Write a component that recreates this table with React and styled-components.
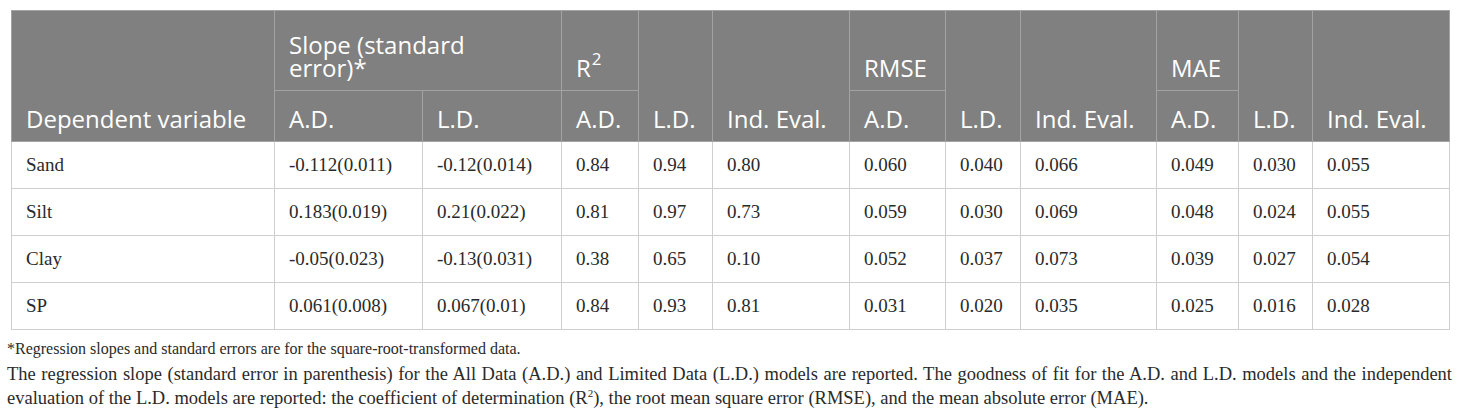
import React from 'react'
import styled, { createGlobalStyle } from 'styled-components'

const GlobalStyle = createGlobalStyle`
  html, body {
    margin: 0;
    padding: 0;
    background: #ffffff;
  }
`

const Page = styled.div`
  width: 1460px;
  height: 420px;
  padding: 10px 0 0 0;
  box-sizing: border-box;
  overflow: hidden;
`

const TableWrap = styled.div`
  padding: 0 10px 0 11px;
`

const Table = styled.table`
  border-collapse: collapse;
  table-layout: fixed;
  width: 1438px;
  border: 1px solid #cfcfcf;
`

const HeadCell = styled.th`
  background: #808080;
  color: #ffffff;
  font-family: 'Open Sans', 'Noto Sans', sans-serif;
  font-weight: 400;
  font-size: 24px;
  line-height: 23px;
  text-align: left;
  vertical-align: bottom;
  padding: 0 14px 11px 14px;
  border: 1px solid #a3a3a3;
  height: ${(p) => (p.$top ? '68px' : '39px')};

  sup {
    font-size: 17px;
    line-height: 0;
    position: relative;
    top: -3px;
    margin-left: 1px;
  }
`

const Row = styled.tr`
  height: 47px;
`

const Cell = styled.td`
  font-family: 'Liberation Serif', 'Times New Roman', serif;
  font-size: 19px;
  color: #2a2a2a;
  padding: 0 14px;
  vertical-align: middle;
  border: 1px solid #cfcfcf;
  white-space: nowrap;
`

const Notes = styled.div`
  padding: 6px 8px 0 7px;
  font-family: 'Liberation Serif', 'Times New Roman', serif;
  color: #2a2a2a;
`

const Note = styled.p`
  margin: 0;
  font-size: ${(p) => (p.$small ? '16px' : '18.5px')};
  line-height: ${(p) => (p.$small ? '25px' : '24px')};
  text-align: ${(p) => (p.$small ? 'left' : 'justify')};
  margin-bottom: ${(p) => (p.$small ? '1px' : '0')};

  sup {
    font-size: 11px;
    line-height: 0;
  }
`

const widths = [263, 148, 139, 77, 74, 137, 96, 75, 136, 82, 74, 137]

const rows = [
  ['Sand', '-0.112(0.011)', '-0.12(0.014)', '0.84', '0.94', '0.80', '0.060', '0.040', '0.066', '0.049', '0.030', '0.055'],
  ['Silt', '0.183(0.019)', '0.21(0.022)', '0.81', '0.97', '0.73', '0.059', '0.030', '0.069', '0.048', '0.024', '0.055'],
  ['Clay', '-0.05(0.023)', '-0.13(0.031)', '0.38', '0.65', '0.10', '0.052', '0.037', '0.073', '0.039', '0.027', '0.054'],
  ['SP', '0.061(0.008)', '0.067(0.01)', '0.84', '0.93', '0.81', '0.031', '0.020', '0.035', '0.025', '0.016', '0.028'],
]

export default function App() {
  return (
    <Page>
      <GlobalStyle />
      <TableWrap>
        <Table>
          <colgroup>
            {widths.map((w, i) => (
              <col key={i} style={{ width: w }} />
            ))}
          </colgroup>
          <thead>
            <tr>
              <HeadCell $top rowSpan={2}>Dependent variable</HeadCell>
              <HeadCell $top colSpan={2}>Slope (standard error)*</HeadCell>
              <HeadCell $top>R<sup>2</sup></HeadCell>
              <HeadCell $top rowSpan={2}>L.D.</HeadCell>
              <HeadCell $top rowSpan={2}>Ind. Eval.</HeadCell>
              <HeadCell $top>RMSE</HeadCell>
              <HeadCell $top rowSpan={2}>L.D.</HeadCell>
              <HeadCell $top rowSpan={2}>Ind. Eval.</HeadCell>
              <HeadCell $top>MAE</HeadCell>
              <HeadCell $top rowSpan={2}>L.D.</HeadCell>
              <HeadCell $top rowSpan={2}>Ind. Eval.</HeadCell>
            </tr>
            <tr>
              <HeadCell>A.D.</HeadCell>
              <HeadCell>L.D.</HeadCell>
              <HeadCell>A.D.</HeadCell>
              <HeadCell>A.D.</HeadCell>
              <HeadCell>A.D.</HeadCell>
            </tr>
          </thead>
          <tbody>
            {rows.map((r) => (
              <Row key={r[0]}>
                {r.map((v, i) => (
                  <Cell key={i}>{v}</Cell>
                ))}
              </Row>
            ))}
          </tbody>
        </Table>
      </TableWrap>
      <Notes>
        <Note $small>*Regression slopes and standard errors are for the square-root-transformed data.</Note>
        <Note>
          The regression slope (standard error in parenthesis) for the All Data (A.D.) and Limited Data (L.D.) models are
          reported. The goodness of fit for the A.D. and L.D. models and the independent evaluation of the L.D. models are
          reported: the coefficient of determination (R<sup>2</sup>), the root mean square error (RMSE), and the mean
          absolute error (MAE).
        </Note>
      </Notes>
    </Page>
  )
}
